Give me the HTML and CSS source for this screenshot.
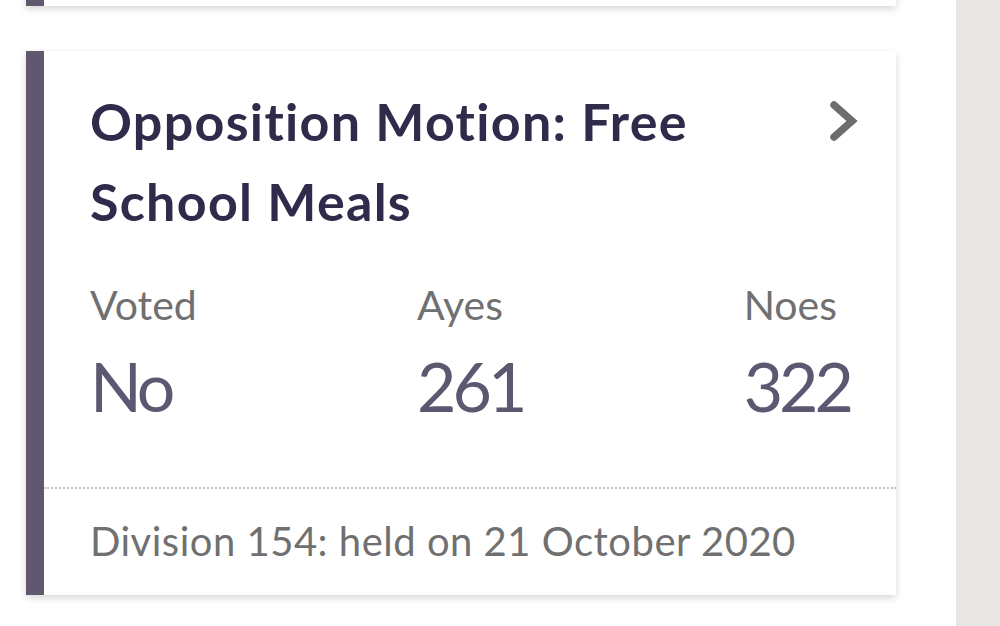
FILE: index.html
```html
<!DOCTYPE html>
<html lang="en">
<head>
  <meta charset="UTF-8">
  <title>Voting record</title>
  <meta name="viewport" content="width=device-width, initial-scale=1.0">
  <link rel="stylesheet" href="styles.css">
</head>
<body>

  <div class="page">
    <main class="votes">
      <ul class="card-list">
        <li class="card card-prev"></li>

        <li class="card">
          <a class="card-head" href="#">
            <h2>Opposition Motion: Free School Meals</h2>
            <svg class="chevron" width="30" height="44" viewBox="0 0 30 44" aria-hidden="true">
              <polyline points="6,6 24,22 6,38" fill="none" stroke="#6d6d6d" stroke-width="7.5" stroke-linecap="round" stroke-linejoin="miter"/>
            </svg>
          </a>

          <div class="tally">
            <div class="stat">
              <span class="label">Voted</span>
              <span class="value">No</span>
            </div>
            <div class="stat">
              <span class="label">Ayes</span>
              <span class="value">261</span>
            </div>
            <div class="stat">
              <span class="label">Noes</span>
              <span class="value">322</span>
            </div>
          </div>

          <p class="card-foot">Division 154: held on 21 October 2020</p>
        </li>
      </ul>
    </main>

    <aside class="side"></aside>
  </div>

</body>
</html>
```

FILE: styles.css
```css
* {
  box-sizing: border-box;
  margin: 0;
  padding: 0;
}

body {
  font-family: Lato, 'Open Sans', sans-serif;
  background-color: #fff;
  color: #707070;
  overflow: hidden;
}

.page {
  display: flex;
  min-height: 626px;
}

.votes {
  flex: 1;
  padding: 0 60px 0 26px;
}

.side {
  width: 44px;
  background-color: #e8e7e6;
}

.card-list {
  list-style: none;
  margin-top: -40px;
  display: flex;
  flex-direction: column;
  gap: 45px;
}

.card {
  background: #fff;
  border-left: 18px solid #615870;
  box-shadow: 0 3px 7px rgba(0, 0, 0, 0.16);
}

.card-prev {
  height: 46px;
}

.card-head {
  display: flex;
  justify-content: space-between;
  align-items: flex-start;
  padding: 30px 38px 0 46px;
  text-decoration: none;
}

.card-head h2 {
  font-size: 52px;
  font-weight: 700;
  line-height: 80px;
  letter-spacing: 1.3px;
  color: #302b4b;
  max-width: 660px;
}

.chevron {
  margin-top: 18px;
}

.tally {
  display: flex;
  justify-content: space-between;
  padding: 40px 46px 58px 46px;
}

.stat {
  display: flex;
  flex-direction: column;
}

.label {
  font-size: 41px;
  line-height: 48px;
  color: #707070;
}

.value {
  margin-top: 14px;
  font-size: 68px;
  line-height: 86px;
  color: #5e5771;
  letter-spacing: -4px;
}

.card-foot {
  border-top: 2px dotted #c4c4c4;
  padding: 28px 46px 30px 46px;
  font-size: 40px;
  line-height: 48px;
  letter-spacing: 0.5px;
  color: #707070;
}
```
